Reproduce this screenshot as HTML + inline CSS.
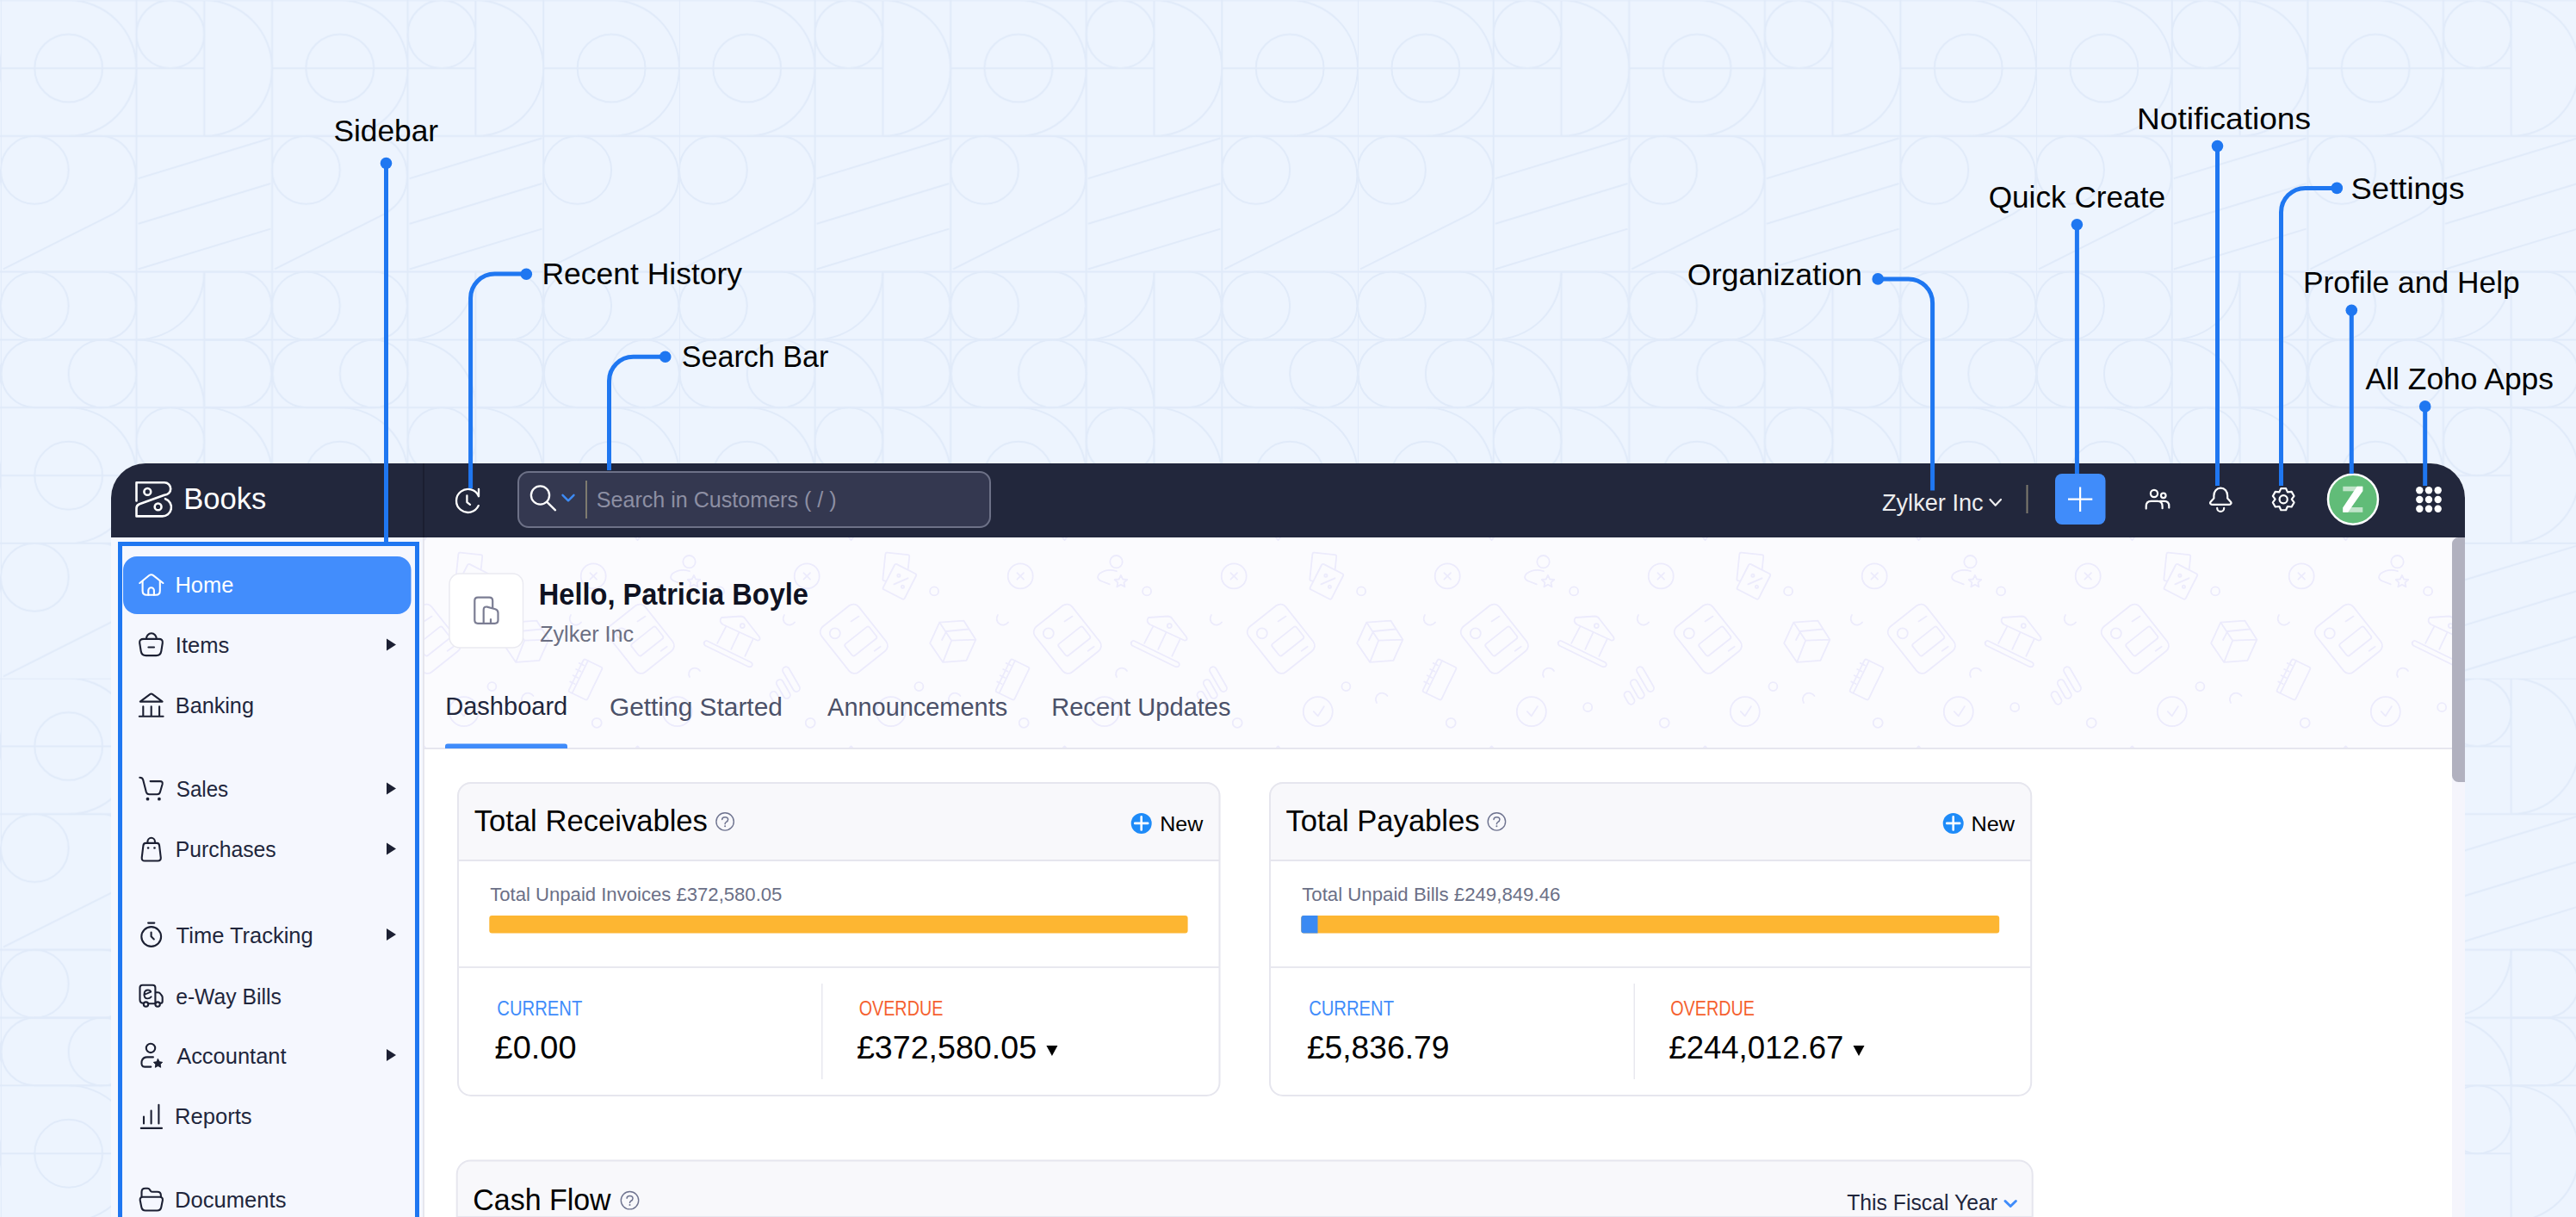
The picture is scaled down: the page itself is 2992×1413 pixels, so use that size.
<!DOCTYPE html>
<html>
<head>
<meta charset="utf-8">
<style>
html,body{margin:0;padding:0;width:2992px;height:1413px;overflow:hidden;background:#EDF4FE;}
svg{display:block;position:absolute;left:0;top:0;}
text{font-family:"Liberation Sans",sans-serif;}
.ann{font-size:34px;fill:#000;}
</style>
</head>
<body>
<svg width="2992" height="1413" viewBox="0 0 2992 1413">
<defs>
<pattern id="bgp" patternUnits="userSpaceOnUse" x="0.8" y="0.4" width="788.10" height="787.2"><g fill="none" stroke="#E0EAF9" stroke-width="2"><path d="M0 0.00 H788.10"/><path d="M0 157.62 H788.10"/><path d="M0 315.24 H788.10"/><path d="M0 394.05 H788.10"/><path d="M0 472.86 H788.10"/><path d="M0 630.48 H788.10"/><path d="M0.00 0 V788.10"/><path d="M157.62 0 V788.10"/><path d="M315.24 0 V788.10"/><path d="M472.86 0 V788.10"/><path d="M630.48 0 V788.10"/><path d="M0.00 78.81 H157.62"/><path d="M78.81 0.00 A78.81 78.81 0 0 1 78.81 157.62"/><circle cx="78.81" cy="78.81" r="39.41"/><path d="M315.24 78.81 H472.86"/><path d="M394.05 0.00 A78.81 78.81 0 0 1 394.05 157.62"/><circle cx="394.05" cy="78.81" r="39.41"/><path d="M630.48 78.81 H788.10"/><path d="M709.29 0.00 A78.81 78.81 0 0 1 709.29 157.62"/><circle cx="709.29" cy="78.81" r="39.41"/><path d="M157.62 78.81 H236.43"/><path d="M236.43 0.00 V157.62"/><circle cx="197.03" cy="39.41" r="39.41"/><path d="M236.43 0.00 A78.81 78.81 0 0 1 236.43 157.62"/><path d="M472.86 78.81 H551.67"/><path d="M551.67 0.00 V157.62"/><circle cx="512.26" cy="39.41" r="39.41"/><path d="M551.67 0.00 A78.81 78.81 0 0 1 551.67 157.62"/><path d="M0.00 551.67 H157.62"/><path d="M78.81 472.86 A78.81 78.81 0 0 1 78.81 630.48"/><circle cx="78.81" cy="551.67" r="39.41"/><path d="M315.24 551.67 H472.86"/><path d="M394.05 472.86 A78.81 78.81 0 0 1 394.05 630.48"/><circle cx="394.05" cy="551.67" r="39.41"/><path d="M630.48 551.67 H788.10"/><path d="M709.29 472.86 A78.81 78.81 0 0 1 709.29 630.48"/><circle cx="709.29" cy="551.67" r="39.41"/><path d="M157.62 551.67 H236.43"/><path d="M236.43 472.86 V630.48"/><circle cx="197.03" cy="512.26" r="39.41"/><path d="M236.43 472.86 A78.81 78.81 0 0 1 236.43 630.48"/><path d="M472.86 551.67 H551.67"/><path d="M551.67 472.86 V630.48"/><circle cx="512.26" cy="512.26" r="39.41"/><path d="M551.67 472.86 A78.81 78.81 0 0 1 551.67 630.48"/><circle cx="39.41" cy="197.03" r="39.41"/><path d="M39.41 157.62 H115.30 C140.00 157.62 157.50 178.62 157.00 205.12 C156.50 223.62 147.00 238.62 130.50 248.12 L3.00 312.12"/><circle cx="354.64" cy="197.03" r="39.41"/><path d="M354.64 157.62 H430.54 C455.24 157.62 472.74 178.62 472.24 205.12 C471.74 223.62 462.24 238.62 445.74 248.12 L318.24 312.12"/><circle cx="669.88" cy="197.03" r="39.41"/><path d="M669.88 157.62 H745.78 C770.48 157.62 787.98 178.62 787.48 205.12 C786.98 223.62 777.48 238.62 760.98 248.12 L633.48 312.12"/><path d="M159.62 206.92 L313.42 160.12"/><path d="M159.62 259.52 L313.42 212.72"/><path d="M159.62 312.12 L313.42 265.32"/><path d="M474.86 206.92 L628.66 160.12"/><path d="M474.86 259.52 L628.66 212.72"/><path d="M474.86 312.12 L628.66 265.32"/><circle cx="39.41" cy="669.88" r="39.41"/><path d="M39.41 630.48 H115.30 C140.00 630.48 157.50 651.48 157.00 677.98 C156.50 696.48 147.00 711.48 130.50 720.98 L3.00 784.98"/><circle cx="354.64" cy="669.88" r="39.41"/><path d="M354.64 630.48 H430.54 C455.24 630.48 472.74 651.48 472.24 677.98 C471.74 696.48 462.24 711.48 445.74 720.98 L318.24 784.98"/><circle cx="669.88" cy="669.88" r="39.41"/><path d="M669.88 630.48 H745.78 C770.48 630.48 787.98 651.48 787.48 677.98 C786.98 696.48 777.48 711.48 760.98 720.98 L633.48 784.98"/><path d="M159.62 679.78 L313.42 632.98"/><path d="M159.62 732.38 L313.42 685.58"/><path d="M159.62 784.98 L313.42 738.18"/><path d="M474.86 679.78 L628.66 632.98"/><path d="M474.86 732.38 L628.66 685.58"/><path d="M474.86 784.98 L628.66 738.18"/><circle cx="39.41" cy="354.64" r="39.41"/><path d="M39.41 315.24 H118.22 A39.41 39.41 0 0 1 118.22 394.05 H39.41"/><circle cx="118.22" cy="433.46" r="39.41"/><path d="M118.22 394.05 H39.41 A39.41 39.41 0 0 0 39.41 472.86 H118.22"/><circle cx="354.64" cy="354.64" r="39.41"/><path d="M354.64 315.24 H433.46 A39.41 39.41 0 0 1 433.46 394.05 H354.64"/><circle cx="433.46" cy="433.46" r="39.41"/><path d="M433.46 394.05 H354.64 A39.41 39.41 0 0 0 354.64 472.86 H433.46"/><circle cx="669.88" cy="354.64" r="39.41"/><path d="M669.88 315.24 H748.70 A39.41 39.41 0 0 1 748.70 394.05 H669.88"/><circle cx="748.70" cy="433.46" r="39.41"/><path d="M748.70 394.05 H669.88 A39.41 39.41 0 0 0 669.88 472.86 H748.70"/><path d="M236.43 315.24 A78.81 78.81 0 0 1 157.62 394.05 A78.81 78.81 0 0 1 236.43 472.86"/><path d="M236.43 315.24 V472.86"/><path d="M236.43 315.24 H275.84 A39.41 39.41 0 0 1 275.84 394.05 H236.43"/><path d="M236.43 394.05 H275.84 A39.41 39.41 0 0 1 275.84 472.86 H236.43"/><path d="M551.67 315.24 A78.81 78.81 0 0 1 472.86 394.05 A78.81 78.81 0 0 1 551.67 472.86"/><path d="M551.67 315.24 V472.86"/><path d="M551.67 315.24 H591.08 A39.41 39.41 0 0 1 591.08 394.05 H551.67"/><path d="M551.67 394.05 H591.08 A39.41 39.41 0 0 1 591.08 472.86 H551.67"/></g></pattern>
  <clipPath id="win"><path d="M129 578 A40 40 0 0 1 169 538 L2823 538 A40 40 0 0 1 2863 578 L2863 1413 L129 1413 Z"/></clipPath>
<pattern id="doo" patternUnits="userSpaceOnUse" x="408" y="625" width="496" height="244"><g fill="none" stroke="#ECEBFC" stroke-width="1.8" stroke-linecap="round" stroke-linejoin="round"><circle cx="33.2" cy="43.9" r="14.5"/><path d="M29.4 40.1 L37 47.7 M37 40.1 L29.4 47.7"/>
<circle cx="181.1" cy="61.4" r="5"/>
<path d="M7 89 A6.5 6.5 0 0 0 19 97.5"/>
<g transform="translate(87.8 116.75) rotate(-38.4)"><rect x="-27.5" y="-33.6" width="55" height="67.2" rx="8"/><rect x="-18" y="-8.5" width="36" height="17.3" rx="2.5" transform="translate(4.5 7)"/></g>
<circle cx="65.8" cy="110.3" r="6"/>
<path d="M84.5 96.6 L93.6 90.6 M111.7 130.8 L118.7 125.8"/>
<circle cx="130.8" cy="201.2" r="17"/><path d="M125.8 201.2 L130.8 206.3 L137.9 195.2"/>
<circle cx="37.2" cy="214.3" r="5.5"/>
<path d="M78.5 -4 L84.5 2 L90.5 -4 M78.5 247.5 L84.5 241.5 L90.5 247.5"/>
<g transform="translate(136.8 34.2) rotate(6)"><rect x="-14" y="-16.5" width="28" height="33" rx="2"/></g>
<g transform="translate(140.9 50.3) rotate(27)"><rect x="-14" y="-16.5" width="28" height="33" rx="2" fill="#FBFBFE"/></g>
<circle cx="139.9" cy="43.3" r="1.6"/><circle cx="144.5" cy="56.3" r="1.6"/><path d="M134.4 53.3 L150.5 46.3"/>
<path d="M187.2 97.6 L215.3 95.6 L229.4 117.7 L218.4 141.9 L191.2 143.9 L176.1 121.8 Z M187.2 97.6 L201.2 118.7 L229.4 117.7 M201.2 118.7 L191.2 143.9 M195 108 L221 105.5 M190 118 L195 108.5"/>
<circle cx="163.4" cy="172.1" r="5"/>
<path d="M199 191 A7 7 0 0 1 211.5 183"/>
<circle cx="281.2" cy="43.9" r="14.5"/><path d="M277.4 40.1 L285 47.7 M285 40.1 L277.4 47.7"/>

<path d="M255 89 A6.5 6.5 0 0 0 267 97.5"/>
<g transform="translate(335.8 116.75) rotate(-38.4)"><rect x="-27.5" y="-33.6" width="55" height="67.2" rx="8"/><rect x="-18" y="-8.5" width="36" height="17.3" rx="2.5" transform="translate(4.5 7)"/></g>
<circle cx="313.8" cy="110.3" r="6"/>
<path d="M332.5 96.6 L341.6 90.6 M359.7 130.8 L366.7 125.8"/>
<circle cx="378.8" cy="201.2" r="17"/><path d="M373.8 201.2 L378.8 206.3 L385.9 195.2"/>
<circle cx="285.2" cy="214.3" r="5.5"/>
<path d="M326.5 -4 L332.5 2 L338.5 -4 M326.5 247.5 L332.5 241.5 L338.5 247.5"/>
<circle cx="392.5" cy="27.2" r="7.2"/>
<path d="M392.9 38.2 Q382 34.5 373 41 Q368 47 376 50 L384.8 53.3"/>
<path d="M397.9 42.8 L400.1 47.5 L405.2 48 L401.4 51.4 L402.5 56.4 L397.9 53.8 L393.3 56.4 L394.4 51.4 L390.6 48 L395.7 47.5 Z"/>
<circle cx="428.1" cy="61.4" r="5"/>
<path d="M430 92 L452 90.5 Q456 90.5 458 94 L474 114.5 Q476 118 472 118.7 L431.5 100 Q426.5 96.5 430 92 Z"/>
<circle cx="454.3" cy="101.6" r="2.5"/>
<path d="M435.2 102.6 L425.1 121.8 M450.3 109.7 L441.2 128.8 M466.4 117.7 L457.3 136.8"/>
<path d="M413 119 L464.3 144 Q467 146 465 148.5 Q463 150 460 148.5 L411 124.5 Q408.5 122 410.5 120 Q411.5 118.5 413 119 Z"/>
<g transform="translate(272 164) rotate(26)"><rect x="-12" y="-21" width="24" height="42" rx="2"/><path d="M-7 -21 V21 M-15 -14 H-9 M-15 -6 H-9 M-15 2 H-9 M-15 10 H-9"/></g>
<path d="M393 161 A6.5 6.5 0 0 1 405 154"/>
<circle cx="444.2" cy="196.2" r="5"/>
<rect x="-4" y="-8" width="8" height="16" rx="4" transform="translate(492.5 185.3) rotate(-30)"/><rect x="-4" y="-12" width="8" height="24" rx="4" transform="translate(501.8 175) rotate(-30)"/><rect x="-4" y="-16" width="8" height="32" rx="4" transform="translate(511 163.6) rotate(-30)"/><rect x="-4" y="-8" width="8" height="16" rx="4" transform="translate(-3.5 185.3) rotate(-30)"/><rect x="-4" y="-12" width="8" height="24" rx="4" transform="translate(5.800000000000011 175) rotate(-30)"/><rect x="-4" y="-16" width="8" height="32" rx="4" transform="translate(15 163.6) rotate(-30)"/></g></pattern>
</defs>
<!-- BACKGROUND -->
<rect x="0" y="0" width="2992" height="1413" fill="#EDF4FE"/>
<rect id="bgpat" x="0" y="0" width="2992" height="1413" fill="url(#bgp)"/>

<!-- APP WINDOW -->
<g clip-path="url(#win)">
  <rect x="129" y="538" width="2734" height="875" fill="#FFFFFF"/>
  <!-- header -->
  <rect x="129" y="538" width="2734" height="86" fill="#22273C"/>
  <rect x="491" y="538" width="2" height="86" fill="#1B1E30"/>
  <!-- sidebar -->
  <rect x="129" y="624" width="363" height="789" fill="#F5F7FE"/>
  <rect x="491" y="624" width="2" height="789" fill="#E6E6EE"/>
  <!-- content top area -->
  <rect x="493" y="624" width="2355" height="245" fill="#FBFBFE"/>
  <rect id="doodles" x="493" y="624" width="2355" height="244" fill="url(#doo)"/>
  <rect x="493" y="868" width="2355" height="2" fill="#E6E6EF"/>
  <!-- scrollbar -->
  <rect x="2848" y="624" width="15" height="789" fill="#F5F5FC"/>
  <path d="M2863 624 L2855.5 624 A7.5 7.5 0 0 0 2848 631.5 L2848 900.5 A7.5 7.5 0 0 0 2855.5 908 L2863 908 Z" fill="#B1B1BF"/>
</g>

<!-- HEADER CONTENT -->
<g id="header">
  <text x="213.27" y="591.00" font-size="35.17" fill="#FFFFFF" textLength="95.98" lengthAdjust="spacingAndGlyphs">Books</text>
  <!-- search box -->
  <rect x="602" y="548" width="548" height="64" rx="12" fill="#343850" stroke="#6D7187" stroke-width="2"/>
  <rect x="680" y="558" width="2" height="44" fill="#7E7B6F"/>
  <text x="692.86" y="589.00" font-size="25.29" fill="#8D8FA3" textLength="278.69" lengthAdjust="spacingAndGlyphs">Search in Customers ( / )</text>
  <!-- org -->
  <text x="2185.94" y="592.90" font-size="27.76" fill="#EDEDEF" textLength="117.78" lengthAdjust="spacingAndGlyphs">Zylker Inc</text>
  <rect x="2353.5" y="563" width="2" height="33" fill="#7E7B6F"/>
  <!-- plus button -->
  <rect x="2387" y="550" width="58.5" height="59" rx="8" fill="#408CFA"/>
  <!-- avatar -->
  <circle cx="2733" cy="579.7" r="29" fill="#61BC78" stroke="#FFFFFF" stroke-width="2.5"/>
</g>

<!-- SIDEBAR CONTENT -->
<g id="sidebar">
  <rect x="143" y="646" width="334.5" height="67" rx="16" fill="#428DFC"/>
  <text x="203.51" y="688.00" font-size="25.44" fill="#FFFFFF" textLength="67.82" lengthAdjust="spacingAndGlyphs">Home</text>
  <g font-size="24" fill="#21263C">
    <text x="203.89" y="757.50" font-size="25.44" fill="#21263C" textLength="62.53" lengthAdjust="spacingAndGlyphs">Items</text>
    <text x="203.83" y="828.00" font-size="25.44" fill="#21263C" textLength="91.09" lengthAdjust="spacingAndGlyphs">Banking</text>
    <text x="204.80" y="924.80" font-size="25.44" fill="#21263C" textLength="60.37" lengthAdjust="spacingAndGlyphs">Sales</text>
    <text x="203.87" y="995.00" font-size="25.44" fill="#21263C" textLength="116.82" lengthAdjust="spacingAndGlyphs">Purchases</text>
    <text x="204.64" y="1094.50" font-size="25.44" fill="#21263C" textLength="159.08" lengthAdjust="spacingAndGlyphs">Time Tracking</text>
    <text x="204.16" y="1165.60" font-size="25.44" fill="#21263C" textLength="122.63" lengthAdjust="spacingAndGlyphs">e-Way Bills</text>
    <text x="205.15" y="1234.60" font-size="25.44" fill="#21263C" textLength="127.44" lengthAdjust="spacingAndGlyphs">Accountant</text>
    <text x="203.11" y="1305.40" font-size="25.44" fill="#21263C" textLength="89.42" lengthAdjust="spacingAndGlyphs">Reports</text>
    <text x="203.10" y="1401.60" font-size="25.44" fill="#21263C" textLength="129.32" lengthAdjust="spacingAndGlyphs">Documents</text>
  </g>
</g>

<!-- CONTENT -->
<g id="content">
  <rect x="522" y="666" width="85.5" height="86" rx="12" fill="#FFFFFF" stroke="#EAEAF1" stroke-width="1.5"/>
  <text x="625.82" y="702.20" font-size="34.30" font-weight="bold" fill="#0F1222" textLength="313.09" lengthAdjust="spacingAndGlyphs">Hello, Patricia Boyle</text>
  <text x="627.20" y="745.40" font-size="24.85" fill="#6B6F82" textLength="108.96" lengthAdjust="spacingAndGlyphs">Zylker Inc</text>
  <g font-size="28">
    <text x="517.22" y="829.90" font-size="28.92" fill="#21263C" textLength="142.05" lengthAdjust="spacingAndGlyphs">Dashboard</text>
    <text x="707.90" y="830.50" font-size="28.63" fill="#4B5169" textLength="201.03" lengthAdjust="spacingAndGlyphs">Getting Started</text>
    <text x="961.14" y="831.20" font-size="28.63" fill="#4B5169" textLength="209.00" lengthAdjust="spacingAndGlyphs">Announcements</text>
    <text x="1221.22" y="831.20" font-size="28.63" fill="#4B5169" textLength="208.33" lengthAdjust="spacingAndGlyphs">Recent Updates</text>
  </g>
  <path d="M517 869 L517 866.5 A3 3 0 0 1 520 863.5 L656 863.5 A3 3 0 0 1 659 866.5 L659 869 Z" fill="#408CFA"/>

  <!-- card 1 -->
  <g id="card1">
<path d="M547 908 L1401.5 908 A16 16 0 0 1 1417.5 924 L1417.5 999 L531 999 L531 924 A16 16 0 0 1 547 908 Z" fill="#F8F8FB"/>
<rect x="532" y="909" width="884.5" height="363" rx="15" fill="none" stroke="#E6E6EE" stroke-width="2"/>
<rect x="532" y="998" width="884.5" height="2" fill="#E6E6EE"/>
<rect x="532" y="1122" width="884.5" height="2" fill="#E8E8EF"/>
<text x="550.73" y="965.00" font-size="35.03" fill="#000000" textLength="271.20" lengthAdjust="spacingAndGlyphs">Total Receivables</text>
<circle cx="842.1" cy="953.9" r="10.2" fill="none" stroke="#6F7490" stroke-width="1.4"/>
<path d="M838.7 951.5 Q838.7 948.7 842.1 948.7 Q845.6 948.7 845.6 951.6 Q845.6 953.5 843.3 954.7 Q842.1 955.4 842.1 956.8" fill="none" stroke="#6F7490" stroke-width="1.5" stroke-linecap="round"/><circle cx="842.1" cy="959.3" r="1" fill="#6F7490"/>
<circle cx="1325.7" cy="955.9" r="12" fill="#1E8BF8"/>
<path d="M1318.2 955.9 H1333.2 M1325.7 948.4 V963.4" stroke="#FFFFFF" stroke-width="2.6" stroke-linecap="round"/>
<text x="1347.15" y="964.90" font-size="24.42" fill="#000000" textLength="50.09" lengthAdjust="spacingAndGlyphs">New</text>
<text x="569.21" y="1045.80" font-size="22.97" fill="#6B7087" textLength="339.21" lengthAdjust="spacingAndGlyphs">Total Unpaid Invoices £372,580.05</text>
<rect x="568.3" y="1063" width="811.3" height="20.6" rx="3" fill="#FDB632"/>
<rect x="954" y="1142" width="1.5" height="111" fill="#E8E8EF"/>
<text x="577.37" y="1178.90" font-size="23.11" fill="#408CFA" textLength="98.89" lengthAdjust="spacingAndGlyphs">CURRENT</text>
<text x="574.63" y="1229.00" font-size="36.05" fill="#000000" textLength="94.85" lengthAdjust="spacingAndGlyphs">£0.00</text>
<text x="997.66" y="1178.90" font-size="23.11" fill="#F5612F" textLength="97.68" lengthAdjust="spacingAndGlyphs">OVERDUE</text>
<text x="994.93" y="1229.00" font-size="36.05" fill="#000000" textLength="209.14" lengthAdjust="spacingAndGlyphs">£372,580.05</text>
<path d="M1215.4 1214 L1228.4 1214 L1221.9 1226 Z" fill="#000000"/>
</g>
  <!-- card 2 -->
  <g id="card2">
<path d="M1490 908 L2344.2 908 A16 16 0 0 1 2360.2 924 L2360.2 999 L1474 999 L1474 924 A16 16 0 0 1 1490 908 Z" fill="#F8F8FB"/>
<rect x="1475" y="909" width="884.1999999999998" height="363" rx="15" fill="none" stroke="#E6E6EE" stroke-width="2"/>
<rect x="1475" y="998" width="884.1999999999998" height="2" fill="#E6E6EE"/>
<rect x="1475" y="1122" width="884.1999999999998" height="2" fill="#E8E8EF"/>
<text x="1493.54" y="965.00" font-size="35.03" fill="#000000" textLength="225.09" lengthAdjust="spacingAndGlyphs">Total Payables</text>
<circle cx="1738.4" cy="953.9" r="10.2" fill="none" stroke="#6F7490" stroke-width="1.4"/>
<path d="M1735.0 951.5 Q1735.0 948.7 1738.4 948.7 Q1741.9 948.7 1741.9 951.6 Q1741.9 953.5 1739.6 954.7 Q1738.4 955.4 1738.4 956.8" fill="none" stroke="#6F7490" stroke-width="1.5" stroke-linecap="round"/><circle cx="1738.4" cy="959.3" r="1" fill="#6F7490"/>
<circle cx="2268.7" cy="955.9" r="12" fill="#1E8BF8"/>
<path d="M2261.2 955.9 H2276.2 M2268.7 948.4 V963.4" stroke="#FFFFFF" stroke-width="2.6" stroke-linecap="round"/>
<text x="2289.52" y="964.90" font-size="24.42" fill="#000000" textLength="50.61" lengthAdjust="spacingAndGlyphs">New</text>
<text x="1512.21" y="1045.80" font-size="22.97" fill="#6B7087" textLength="300.16" lengthAdjust="spacingAndGlyphs">Total Unpaid Bills £249,849.46</text>
<rect x="1511.3" y="1063" width="810.8999999999999" height="20.6" rx="3" fill="#FDB632"/>
<path d="M1514.3 1063 L1530.5 1063 L1530.5 1083.6 L1514.3 1083.6 A3 3 0 0 1 1511.3 1080.6 L1511.3 1066 A3 3 0 0 1 1514.3 1063 Z" fill="#3A8AF3"/>
<rect x="1897.5" y="1142" width="1.5" height="111" fill="#E8E8EF"/>
<text x="1520.17" y="1178.90" font-size="23.11" fill="#408CFA" textLength="98.89" lengthAdjust="spacingAndGlyphs">CURRENT</text>
<text x="1517.95" y="1229.00" font-size="36.05" fill="#000000" textLength="165.41" lengthAdjust="spacingAndGlyphs">£5,836.79</text>
<text x="1940.26" y="1178.90" font-size="23.11" fill="#F5612F" textLength="97.68" lengthAdjust="spacingAndGlyphs">OVERDUE</text>
<text x="1938.37" y="1229.00" font-size="36.05" fill="#000000" textLength="203.07" lengthAdjust="spacingAndGlyphs">£244,012.67</text>
<path d="M2152.5 1214 L2165.5 1214 L2159.0 1226 Z" fill="#000000"/>
</g>
  <!-- cash flow -->
  <g id="card3">
<path d="M546.7 1347.4 L2344.7 1347.4 A16 16 0 0 1 2360.7 1363.4 L2360.7 1413 L530.7 1413 L530.7 1363.4 A16 16 0 0 1 546.7 1347.4 Z" fill="#F8F8FB" stroke="#E6E6EE" stroke-width="2"/>
  <text x="549.28" y="1404.60" font-size="35.03" fill="#000000" textLength="160.34" lengthAdjust="spacingAndGlyphs">Cash Flow</text>
  <circle cx="731.5" cy="1393.7" r="10.2" fill="none" stroke="#6F7490" stroke-width="1.4"/>
  <path d="M728.1 1391.3 Q728.1 1388.5 731.5 1388.5 Q735.0 1388.5 735.0 1391.4 Q735.0 1393.3 732.7 1394.5 Q731.5 1395.2 731.5 1396.6" fill="none" stroke="#6F7490" stroke-width="1.5" stroke-linecap="round"/><circle cx="731.5" cy="1399.1" r="1" fill="#6F7490"/>
  <text x="2145.25" y="1405.30" font-size="26.60" fill="#21263C" textLength="174.65" lengthAdjust="spacingAndGlyphs">This Fiscal Year</text>
  <path d="M2329 1394.5 L2335.2 1400.5 L2341.4 1394.5" fill="none" stroke="#408CFA" stroke-width="3" stroke-linecap="round" stroke-linejoin="round"/>
</g>
</g>


<g id="icons" fill="none" stroke-linecap="round" stroke-linejoin="round">
  <!-- logo -->
  <g stroke="#FFFFFF" stroke-width="2.6">
    <path d="M158.5 581.5 V560.3 H191 A7.2 7.2 0 0 1 191 574.7 L162 585.2 Q158.5 586.6 158.5 590 V599.4 H188 A10.4 10.4 0 0 0 192 579.2"/>
    <circle cx="171.3" cy="570.9" r="3.9"/>
    <circle cx="183.6" cy="588.4" r="3.9"/>
  </g>
  <!-- history -->
  <g stroke="#FFFFFF" stroke-width="2.3">
    <path d="M555.8 587.1 A13.5 13.5 0 1 1 556 576.3 V567.8"/>
    <path d="M542.4 575.5 V583.1 L546 585.9"/>
  </g>
  <!-- search -->
  <g stroke="#FFFFFF" stroke-width="2.3">
    <circle cx="627.5" cy="575" r="10.6"/>
    <path d="M635.6 583.2 L645 592.3"/>
  </g>
  <path d="M653.5 574.8 L660 581.3 L666.5 574.8" stroke="#3D8BF5" stroke-width="2.4"/>
  <!-- org chevron -->
  <path d="M2311.5 580 L2317.7 586.8 L2324 580" stroke="#EDEDEF" stroke-width="2.2"/>
  <!-- plus -->
  <path d="M2402 579.7 H2430.3 M2416.1 565.4 V594" stroke="#FFFFFF" stroke-width="2.2" stroke-linecap="butt"/>
  <!-- people -->
  <g stroke="#FFFFFF" stroke-width="2.2">
    <circle cx="2502" cy="573" r="4.1"/>
    <circle cx="2512.75" cy="575.3" r="2.8"/>
    <path d="M2492.7 590.6 V588 Q2492.7 581.9 2498.5 581.9 H2506 Q2511.6 581.9 2511.6 588 V590.2"/>
    <path d="M2509 581.9 H2514 Q2519.3 581.9 2519.3 587.5 V589.6"/>
  </g>
  <!-- bell -->
  <g stroke="#FFFFFF" stroke-width="2.2">
    <path d="M2579.3 566.6 C2574.5 566.6 2571.4 570.5 2571.4 575.5 V578.5 L2567.8 582.5 Q2566.5 584 2567.5 585 Q2568.3 585.9 2570 585.9 H2588.6 Q2590.3 585.9 2591.1 585 Q2592.1 584 2590.8 582.5 L2587.2 578.5 V575.5 C2587.2 570.5 2584.1 566.6 2579.3 566.6 Z"/>
    <path d="M2575.2 589.9 A4 4 0 0 0 2583.2 589.9"/>
  </g>
  <!-- gear -->
  <g stroke="#FFFFFF" stroke-width="2.2">
    <path d="M2647.40 571.39 L2649.30 567.13 L2655.10 567.13 L2657.00 571.39 L2661.63 570.90 L2664.54 575.93 L2661.80 579.70 L2664.54 583.47 L2661.63 588.50 L2657.00 588.01 L2655.10 592.27 L2649.30 592.27 L2647.40 588.01 L2642.77 588.50 L2639.86 583.47 L2642.60 579.70 L2639.86 575.93 L2642.77 570.90 L2647.40 571.39 Z"/>
    <circle cx="2652.2" cy="579.7" r="4.6"/>
  </g>
  <!-- avatar Z -->
  <g stroke="none">
    <rect x="2721.3" y="564.8" width="23" height="5.5" fill="#FFFFFF" fill-opacity="0.6"/>
    <rect x="2721.3" y="589" width="23" height="5.8" fill="#FFFFFF" fill-opacity="0.6"/>
    <path d="M2737.8 564.8 H2744.3 V570.3 L2731.2 589 L2727.2 594.8 H2721.3 V589.3 L2734 570.3 Z" fill="#FFFFFF"/>
  </g>
  <!-- grid -->
  <g fill="#FFFFFF" stroke="none">
    <circle cx="2810.3" cy="569.2" r="4.2"/><circle cx="2821" cy="569.2" r="4.2"/><circle cx="2831.7" cy="569.2" r="4.2"/>
    <circle cx="2810.3" cy="580" r="4.2"/><circle cx="2821" cy="580" r="4.2"/><circle cx="2831.7" cy="580" r="4.2"/>
    <circle cx="2810.3" cy="590.8" r="4.2"/><circle cx="2821" cy="590.8" r="4.2"/><circle cx="2831.7" cy="590.8" r="4.2"/>
  </g>
  <!-- sidebar icons -->
  <g stroke="#FFFFFF" stroke-width="2.1">
    <path d="M162.3 677 L173 668.3 Q175.7 666.2 178.4 668.3 L189.4 677"/>
    <path d="M165.6 674.8 V686 Q165.6 690.7 170.3 690.7 H181.1 Q185.8 690.7 185.8 686 V674.8"/>
    <path d="M172.3 690.7 V685.5 A3.3 3.3 0 0 1 178.9 685.5 V690.7"/>
  </g>
  <g stroke="#1C2033" stroke-width="2.1">
    <!-- items -->
    <path d="M167 741.9 H184.5 Q189.3 741.9 188.8 746.5 L187.3 756 Q186.5 761.1 181.5 761.1 H169.5 Q164.5 761.1 163.7 756 L162.2 746.5 Q161.7 741.9 167 741.9 Z"/>
    <path d="M169.9 741.9 A5.95 6.6 0 0 1 181.8 741.9"/>
    <path d="M172.4 751.5 H179"/>
    <!-- banking -->
    <path d="M162.8 814.6 L174.2 806.1 Q175.7 805 177.2 806.1 L188.6 814.6 Z"/>
    <path d="M166.3 820.2 V831.5 M175.7 820.2 V831.5 M185.1 820.2 V831.5 M161.8 831.8 H189.6"/>
    <!-- sales -->
    <path d="M162.3 902.8 Q165.5 902.8 166.2 905.5 L169.8 919.5 Q170.6 922.3 173.5 922.3 H182.5 Q185.3 922.3 186 919.5 L188.6 910.5 Q189.3 907.1 186 907.1 H174.6"/>
    <!-- purchases -->
    <path d="M169.3 978.9 H182.4 Q184.8 978.9 185.1 981.8 L186.8 995.8 Q187 999.5 183.4 999.5 H168 Q164.5 999.5 164.7 995.8 L166.4 981.8 Q166.7 978.9 169.3 978.9 Z"/>
    <path d="M171.4 978.9 V977.5 A4.3 4.7 0 0 1 180 977.5 V978.9"/>
    <!-- time tracking -->
    <path d="M172.1 1071.6 H179.3"/>
    <circle cx="175.7" cy="1087.5" r="11.4"/>
    <path d="M175.6 1082.6 V1087.3 L178.8 1090.4"/>
    <!-- eway -->
    <path d="M166.5 1164.8 Q162.5 1164.8 162.5 1160.8 V1146.8 Q162.5 1143.8 165.5 1143.8 H177.4 Q180.4 1143.8 180.4 1146.8 V1165.2 M172.4 1165.2 H180.4"/>
    <path d="M181.1 1152.2 H183.3 Q185.3 1152.2 186.5 1154 L188.2 1156.4 Q188.7 1157.2 188.7 1158.5 V1162.5 Q188.7 1164.8 186.6 1164.8"/>
    <circle cx="169.5" cy="1166.1" r="2.7"/>
    <circle cx="183.1" cy="1166.1" r="2.7"/>
    <path d="M167.3 1155 L175.2 1151.6 Q174.6 1149.5 171.9 1149.5 Q167.6 1149.5 167.5 1154.5 Q167.5 1159.4 171.4 1159.4 Q173.8 1159.4 175.6 1157.3" stroke-width="1.9"/>
    <!-- accountant -->
    <circle cx="175" cy="1216.9" r="5.2"/>
    <path d="M177.9 1227.4 H171 Q166 1227.4 164.6 1232 Q163.6 1238.6 168 1238.6 H175.3"/>
    <!-- reports -->
    <path d="M167 1296.5 V1304.5 M175.6 1289.6 V1304.5 M184.4 1282.8 V1304.5 M163.8 1309.9 H188"/>
    <!-- documents -->
    <path d="M164.5 1389.2 V1384 Q164.5 1379.8 168.7 1379.8 H171.4 Q173 1379.8 174.2 1381.6 L175 1382.8 Q175.7 1383.8 177.3 1383.8 H182.8 Q186.9 1383.8 186.9 1388 V1389.2"/>
    <path d="M166 1389.8 H185.5 Q189.3 1389.8 188.9 1393.5 L187.3 1401.5 Q186.6 1405.5 182.6 1405.5 H169 Q165 1405.5 164.3 1401.5 L162.7 1393.5 Q162.3 1389.8 166 1389.8 Z"/>
  </g>
  <g fill="#1C2033" stroke="none">
    <circle cx="171.5" cy="927.7" r="1.9"/><circle cx="184.9" cy="927.7" r="1.9"/>
    <circle cx="172.1" cy="984.5" r="1.3"/><circle cx="179.5" cy="984.5" r="1.3"/>
    <path d="M183.5 1229.6 L185.1 1232.8 L188.6 1233.3 L186.1 1235.8 L186.7 1239.3 L183.5 1237.6 L180.3 1239.3 L180.9 1235.8 L178.4 1233.3 L181.9 1232.8 Z" stroke="#1C2033" stroke-width="1"/>
    <!-- arrows -->
    <path d="M449 741.6 L460 748.6 L449 755.6 Z"/>
    <path d="M449 908.6 L460 915.6 L449 922.6 Z"/>
    <path d="M449 978.6 L460 985.6 L449 992.6 Z"/>
    <path d="M449 1078 L460 1085 L449 1092 Z"/>
    <path d="M449 1218.1 L460 1225.1 L449 1232.1 Z"/>
  </g>
  <!-- org icon -->
  <g stroke="#7B7D93" stroke-width="2.2">
    <path d="M561.7 723.8 H555 Q551.3 723.8 551.3 720 V697.4 Q551.3 693.6 555 693.6 H568.4 Q572.2 693.6 572.2 697.4 V705.8"/>
    <path d="M561.7 723.8 V708 Q561.7 704 565.8 704.6 L575.3 707.2 Q578.5 708.2 578.5 711.5 V720 Q578.5 723.8 574.7 723.8 Z"/>
    <path d="M570 719 V723.8"/>
  </g>
</g>

<!-- ANNOTATIONS -->
<g id="annotations" fill="none" stroke="#1F77F1" stroke-width="5" stroke-linecap="butt">
  <rect x="139.5" y="631.5" width="345" height="800"/>
  <path d="M448.5 189.5 L448.5 629"/>
  <path d="M611.3 318 L574.6 318 A28 28 0 0 0 546.6 346 L546.6 567"/>
  <path d="M772.7 414.2 L735.5 414.2 A28 28 0 0 0 707.5 442.2 L707.5 546"/>
  <path d="M2181.2 323.9 L2216.6 323.9 A28 28 0 0 1 2244.6 351.9 L2244.6 569.6"/>
  <path d="M2412.4 260.8 L2412.4 550"/>
  <path d="M2575.5 169.6 L2575.5 564"/>
  <path d="M2714.3 218.4 L2677.5 218.4 A28 28 0 0 0 2649.5 246.4 L2649.5 564"/>
  <path d="M2731.3 360 L2731.3 550"/>
  <path d="M2816.7 472 L2816.7 564"/>
</g>
<g fill="#1F77F1">
  <circle cx="448.5" cy="189.5" r="6.8"/>
  <circle cx="611.3" cy="318.3" r="6.8"/>
  <circle cx="772.7" cy="414.3" r="6.8"/>
  <circle cx="2181.2" cy="323.9" r="6.8"/>
  <circle cx="2412.4" cy="260.8" r="6.8"/>
  <circle cx="2575.5" cy="169.6" r="6.8"/>
  <circle cx="2714.3" cy="218.4" r="6.8"/>
  <circle cx="2731.3" cy="360.2" r="6.8"/>
  <circle cx="2816.7" cy="471.9" r="6.8"/>
</g>
<g class="ann">
  <text x="387.40" y="164.40" font-size="35.17" fill="#000000" textLength="121.69" lengthAdjust="spacingAndGlyphs">Sidebar</text>
  <text x="629.49" y="330.20" font-size="35.47" fill="#000000" textLength="232.58" lengthAdjust="spacingAndGlyphs">Recent History</text>
  <text x="791.75" y="425.50" font-size="35.17" fill="#000000" textLength="170.61" lengthAdjust="spacingAndGlyphs">Search Bar</text>
  <text x="1959.80" y="331.40" font-size="35.17" fill="#000000" textLength="203.23" lengthAdjust="spacingAndGlyphs">Organization</text>
  <text x="2309.63" y="240.90" font-size="35.17" fill="#000000" textLength="205.43" lengthAdjust="spacingAndGlyphs">Quick Create</text>
  <text x="2482.06" y="149.60" font-size="35.17" fill="#000000" textLength="201.98" lengthAdjust="spacingAndGlyphs">Notifications</text>
  <text x="2730.54" y="230.50" font-size="35.17" fill="#000000" textLength="131.88" lengthAdjust="spacingAndGlyphs">Settings</text>
  <text x="2675.00" y="340.30" font-size="35.17" fill="#000000" textLength="251.69" lengthAdjust="spacingAndGlyphs">Profile and Help</text>
  <text x="2747.63" y="452.00" font-size="35.17" fill="#000000" textLength="218.34" lengthAdjust="spacingAndGlyphs">All Zoho Apps</text>
</g>
</svg>
</body>
</html>
